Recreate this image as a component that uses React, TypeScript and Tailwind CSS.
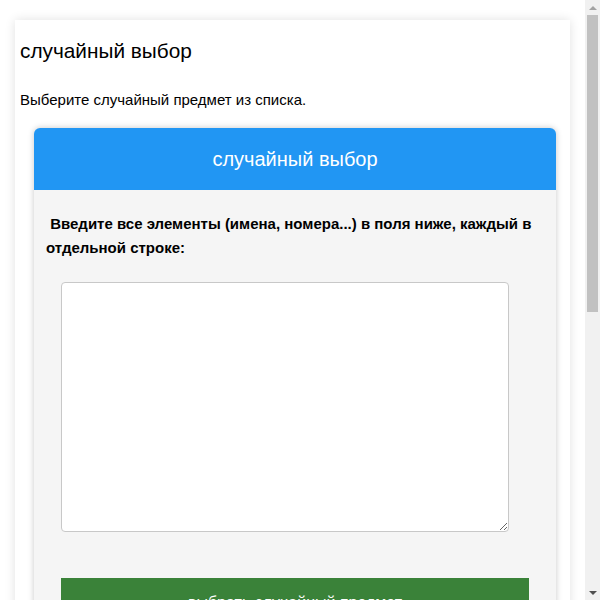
import { useState } from 'react';

function FakeScrollbar() {
  // the reference shows a classic scrollbar, drawn over the right edge
  return (
    <div className="fixed top-0 right-0 h-screen w-[15px] bg-[#f1f1f1] flex flex-col items-center">
      <div className="h-[15px] w-full flex items-center justify-center">
        <div className="w-0 h-0 border-l-[4px] border-r-[4px] border-b-[4px] border-l-transparent border-r-transparent border-b-[#a3a3a3]" />
      </div>
      <div className="w-[11px] h-[297px] bg-[#c1c1c1]" />
      <div className="flex-1" />
      <div className="h-[15px] w-full flex items-center justify-center">
        <div className="w-0 h-0 border-l-[4px] border-r-[4px] border-t-[4px] border-l-transparent border-r-transparent border-t-[#505050]" />
      </div>
    </div>
  );
}

export default function App() {
  const [items, setItems] = useState('');
  const [picked, setPicked] = useState('');

  function pick() {
    const list = items
      .split('\n')
      .map((s) => s.trim())
      .filter(Boolean);
    if (!list.length) {
      setPicked('');
      return;
    }
    setPicked(list[Math.floor(Math.random() * list.length)]);
  }

  return (
    <div className="min-h-screen bg-white text-black font-['Liberation_Sans',Arial,sans-serif]">
      <div className="w-[585px]">
        <div className="mx-[15px] mt-5 pt-[19px] pb-10 bg-white shadow-[0_0_10px_rgba(0,0,0,0.12)]">
          <h2 className="pl-[5px] text-[20.8px] leading-[24px] font-normal">случайный выбор</h2>
          <p className="pl-[5px] mt-[28px] text-[15px] leading-[18px]">
            Выберите случайный предмет из списка.
          </p>

          <div className="ml-[19px] mt-[19px] w-[522px] rounded-t-[6px] bg-[#f5f5f5] shadow-[0_0_6px_rgba(0,0,0,0.22)]">
            <div className="h-[62px] flex items-center justify-center rounded-t-[6px] bg-[#2196f3] text-white text-[20px]">
              случайный выбор
            </div>

            <div className="pt-[22px] pb-8">
              <label className="block px-3 text-[15px] leading-[24px] font-bold">
                {'\u00a0'}Введите все элементы (имена, номера...) в поля ниже, каждый в отдельной строке:
              </label>

              <textarea
                value={items}
                onChange={(e) => setItems(e.target.value)}
                className="block ml-[27px] mt-[22px] w-[448px] h-[250px] p-2 bg-white border border-[#c8c8c8] rounded-[4px] text-[15px] outline-none"
              />

              <button
                type="button"
                onClick={pick}
                className="block ml-[27px] mt-[46px] w-[468px] py-[15px] bg-[#3a8239] text-white text-[16px] leading-[20px]"
              >
                выбрать случайный предмет
              </button>

              <div className="mx-[27px] mt-6 min-h-[60px] flex items-center justify-center bg-white border border-[#ddd] text-[22px] font-bold">
                {picked}
              </div>
            </div>
          </div>

          <div className="px-[5px] mt-8 text-[15px] leading-[22px] space-y-3">
            <h3 className="text-[18px] font-bold">Как пользоваться</h3>
            <p>Введите каждый элемент списка в отдельной строке текстового поля.</p>
            <p>Нажмите кнопку «выбрать случайный предмет», чтобы получить результат.</p>
            <p>Пустые строки не учитываются. Можно нажимать кнопку несколько раз.</p>
            <p>Инструмент подходит для жеребьёвки, выбора победителя или случайного имени из списка.</p>
            <p>Все данные обрабатываются в браузере и никуда не отправляются.</p>
          </div>
        </div>
      </div>
      <FakeScrollbar />
    </div>
  );
}
